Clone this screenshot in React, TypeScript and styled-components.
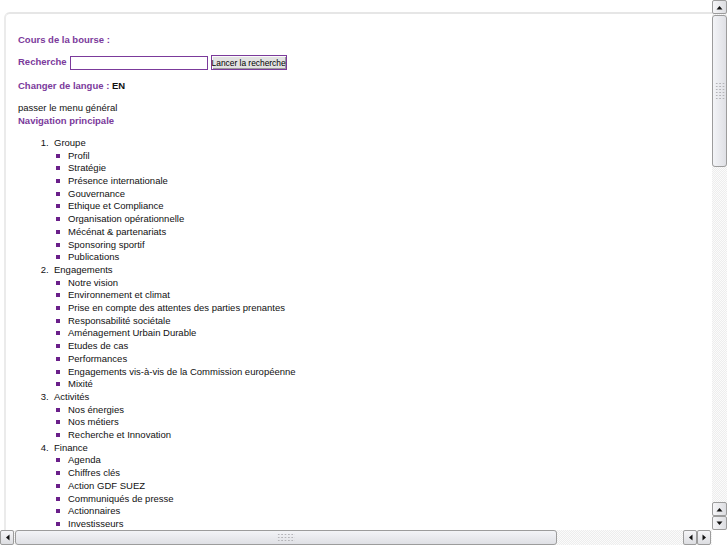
import React from 'react';
import styled, { createGlobalStyle } from 'styled-components';

const PURPLE = '#7b3a9b';
const BULLET = '#6a1f8a';

const Global = createGlobalStyle`
  html, body { margin: 0; padding: 0; background: #fff; overflow: hidden; }
  body { font-family: "Liberation Sans", Arial, sans-serif; }
`;

const Window = styled.div`
  width: 727px;
  height: 545px;
  display: grid;
  grid-template-columns: 712px 15px;
  grid-template-rows: 530px 15px;
  background: #fff;
`;

const Viewport = styled.div`
  overflow: hidden;
  padding: 12px 0 0 4px;
  box-sizing: border-box;
`;

const Frame = styled.div`
  height: 100%;
  box-sizing: border-box;
  border-top: 2px solid #e6e6e6;
  border-left: 2px solid #ebebeb;
  border-top-left-radius: 6px;
  padding: 20.3px 0 0 12px;
  font-size: 9.5px;
  line-height: 12.7px;
  color: #111;
  overflow: hidden;
`;

const Heading = styled.div<{ $gap?: number }>`
  font-weight: bold;
  color: ${PURPLE};
  margin-top: ${(p) => p.$gap ?? 0}px;
`;

const Strong = styled.span`
  color: #111;
`;

const SearchRow = styled.form`
  display: flex;
  align-items: center;
  gap: 3px;
  height: 15px;
  margin: 8.2px 0 0 0;
`;

const Label = styled.label`
  font-weight: bold;
  color: ${PURPLE};
`;

const Input = styled.input`
  width: 138px;
  height: 14px;
  box-sizing: border-box;
  border: 1px solid ${PURPLE};
  margin: 0;
  padding: 0 2px;
  background: #fff;
`;

const Button = styled.button`
  width: 76px;
  height: 15px;
  box-sizing: border-box;
  border: 1px solid ${PURPLE};
  background: #e2e2e2;
  box-shadow: inset 1px 1px #fafafa, inset -1px -1px #9a9a9a;
  margin: 0;
  padding: 0;
  font-family: "Liberation Sans", Arial, sans-serif;
  font-size: 8.4px;
  color: #000;
  white-space: nowrap;
`;

const Plain = styled.div<{ $gap?: number }>`
  margin-top: ${(p) => p.$gap ?? 0}px;
`;

const MainList = styled.ol`
  margin: 9.6px 0 0 0;
  padding-left: 36px;
  list-style: decimal;
`;

const MainItem = styled.li`
  &::marker {
    content: counter(list-item) ".  ";
  }
`;

const SubList = styled.ul`
  margin: 0;
  padding-left: 2px;
  list-style: none;
`;

const SubItem = styled.li`
  white-space: nowrap;
  &::before {
    content: '';
    display: inline-block;
    width: 4px;
    height: 4px;
    background: ${BULLET};
    margin-right: 8px;
    vertical-align: 1px;
  }
`;

const VScroll = styled.div`
  display: flex;
  flex-direction: column;
  background: #f8f8f8 repeating-conic-gradient(#ededed 0 25%, #fbfbfb 0 50%) 0 0 / 2px 2px;
`;

const HScroll = styled.div`
  display: flex;
  flex-direction: row;
  background: #f8f8f8 repeating-conic-gradient(#ededed 0 25%, #fbfbfb 0 50%) 0 0 / 2px 2px;
`;

const Corner = styled.div`
  background: #fff;
`;

const ArrowBtn = styled.div<{ $h?: boolean }>`
  flex: none;
  width: ${(p) => (p.$h ? '14px' : '15px')};
  height: ${(p) => (p.$h ? '15px' : '14px')};
  box-sizing: border-box;
  border: 1px solid #9c9c9c;
  border-radius: 2px;
  background: linear-gradient(${(p) => (p.$h ? 'to bottom' : 'to right')}, #f6f6f8, #dcdde1);
  display: flex;
  align-items: center;
  justify-content: center;
`;

const Thumb = styled.div<{ $h?: boolean }>`
  flex: none;
  box-sizing: border-box;
  border: 1px solid #9c9c9c;
  border-radius: 3px;
  background: linear-gradient(${(p) => (p.$h ? 'to bottom' : 'to right')}, #f3f4f7, #dfe0e5);
  display: flex;
  align-items: center;
  justify-content: center;
`;

const Grip = styled.div<{ $w: number; $hgt: number }>`
  width: ${(p) => p.$w}px;
  height: ${(p) => p.$hgt}px;
  background-image: radial-gradient(circle, #b4b4b8 0.7px, transparent 0.9px);
  background-size: 3.4px 3px;
`;

const Fill = styled.div`
  flex: 1;
`;

const Pad = styled.div`
  flex: none;
  width: 1px;
`;

type Dir = 'up' | 'down' | 'left' | 'right';
const tri: Record<Dir, string> = {
  up: '0.5,4.5 3.5,1 6.5,4.5',
  down: '0.5,0.5 3.5,4 6.5,0.5',
  left: '4.5,0.5 1,3.5 4.5,6.5',
  right: '0.5,0.5 4,3.5 0.5,6.5',
};

const Arrow = ({ dir }: { dir: Dir }) => {
  const horiz = dir === 'left' || dir === 'right';
  return (
    <svg width={horiz ? 5 : 7} height={horiz ? 7 : 5} viewBox={horiz ? '0 0 5 7' : '0 0 7 5'}>
      <polygon points={tri[dir]} fill="#111" />
    </svg>
  );
};

const groups: { title: string; items: string[] }[] = [
  {
    title: 'Groupe',
    items: [
      'Profil',
      'Stratégie',
      'Présence internationale',
      'Gouvernance',
      'Ethique et Compliance',
      'Organisation opérationnelle',
      'Mécénat & partenariats',
      'Sponsoring sportif',
      'Publications',
    ],
  },
  {
    title: 'Engagements',
    items: [
      'Notre vision',
      'Environnement et climat',
      'Prise en compte des attentes des parties prenantes',
      'Responsabilité sociétale',
      'Aménagement Urbain Durable',
      'Etudes de cas',
      'Performances',
      'Engagements vis-à-vis de la Commission européenne',
      'Mixité',
    ],
  },
  {
    title: 'Activités',
    items: ['Nos énergies', 'Nos métiers', 'Recherche et Innovation'],
  },
  {
    title: 'Finance',
    items: [
      'Agenda',
      'Chiffres clés',
      'Action GDF SUEZ',
      'Communiqués de presse',
      'Actionnaires',
      'Investisseurs',
    ],
  },
];

export default function App() {
  return (
    <>
      <Global />
      <Window>
        <Viewport>
          <Frame>
            <Heading>Cours de la bourse :</Heading>
            <SearchRow onSubmit={(e) => e.preventDefault()}>
              <Label htmlFor="q">Recherche</Label>
              <Input id="q" type="text" />
              <Button type="submit">Lancer la recherche</Button>
            </SearchRow>
            <Heading $gap={9.6}>
              Changer de langue : <Strong>EN</Strong>
            </Heading>
            <Plain $gap={9.4}>passer le menu général</Plain>
            <Heading>Navigation principale</Heading>
            <MainList>
              {groups.map((g) => (
                <MainItem key={g.title}>
                  {g.title}
                  <SubList>
                    {g.items.map((it) => (
                      <SubItem key={it}>{it}</SubItem>
                    ))}
                  </SubList>
                </MainItem>
              ))}
            </MainList>
          </Frame>
        </Viewport>
        <VScroll>
          <ArrowBtn>
            <Arrow dir="up" />
          </ArrowBtn>
          <Thumb style={{ height: 152, marginTop: 1 }}>
            <Grip $w={10} $hgt={18} />
          </Thumb>
          <Fill />
          <ArrowBtn>
            <Arrow dir="up" />
          </ArrowBtn>
          <ArrowBtn>
            <Arrow dir="down" />
          </ArrowBtn>
        </VScroll>
        <HScroll>
          <ArrowBtn $h>
            <Arrow dir="left" />
          </ArrowBtn>
          <Thumb $h style={{ width: 542, marginLeft: 1 }}>
            <Grip $w={18} $hgt={9} />
          </Thumb>
          <Fill />
          <ArrowBtn $h>
            <Arrow dir="left" />
          </ArrowBtn>
          <ArrowBtn $h>
            <Arrow dir="right" />
          </ArrowBtn>
          <Pad />
        </HScroll>
        <Corner />
      </Window>
    </>
  );
}
